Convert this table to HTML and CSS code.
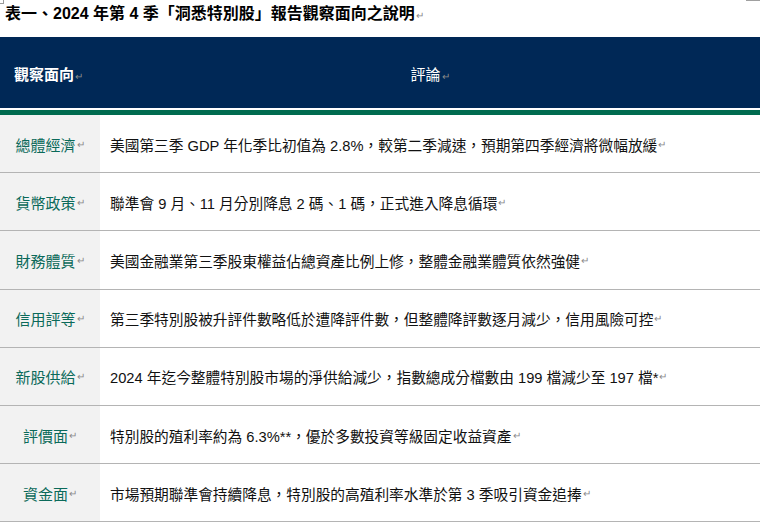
FILE: index.html
```html
<!DOCTYPE html>
<html lang="zh-Hant">
<head>
<meta charset="utf-8">
<title>表一</title>
<link rel="stylesheet" href="styles.css">
</head>
<body>
<div class="page">
  <span class="corner-tl"></span>
  <span class="corner-tr"></span>
  <h1 class="title">表一、2024 年第 4 季「洞悉特別股」報告觀察面向之說明<span class="pm">↵</span></h1>
  <div class="head">
    <div class="head-label">觀察面向<span class="pm">↵</span></div>
    <div class="head-comment">評論<span class="pm">↵</span></div>
  </div>
  <div class="rule"></div>
  <div class="table">
    <div class="row">
      <div class="label">總體經濟<span class="pm">↵</span></div>
      <div class="text">美國第三季 GDP 年化季比初值為 2.8%，較第二季減速，預期第四季經濟將微幅放緩<span class="pm">↵</span></div>
    </div>
    <div class="row">
      <div class="label">貨幣政策<span class="pm">↵</span></div>
      <div class="text">聯準會 9 月、11 月分別降息 2 碼、1 碼，正式進入降息循環<span class="pm">↵</span></div>
    </div>
    <div class="row">
      <div class="label">財務體質<span class="pm">↵</span></div>
      <div class="text">美國金融業第三季股東權益佔總資產比例上修，整體金融業體質依然強健<span class="pm">↵</span></div>
    </div>
    <div class="row">
      <div class="label">信用評等<span class="pm">↵</span></div>
      <div class="text">第三季特別股被升評件數略低於遭降評件數，但整體降評數逐月減少，信用風險可控<span class="pm">↵</span></div>
    </div>
    <div class="row">
      <div class="label">新股供給<span class="pm">↵</span></div>
      <div class="text">2024 年迄今整體特別股市場的淨供給減少，指數總成分檔數由 199 檔減少至 197 檔*<span class="pm">↵</span></div>
    </div>
    <div class="row">
      <div class="label">評價面<span class="pm">↵</span></div>
      <div class="text">特別股的殖利率約為 6.3%**，優於多數投資等級固定收益資產<span class="pm">↵</span></div>
    </div>
    <div class="row">
      <div class="label">資金面<span class="pm">↵</span></div>
      <div class="text">市場預期聯準會持續降息，特別股的高殖利率水準於第 3 季吸引資金追捧<span class="pm">↵</span></div>
    </div>
  </div>
</div>
</body>
</html>
```
FILE: styles.css
```css
html, body {
  margin: 0;
  padding: 0;
  background: #ffffff;
}
body {
  font-family: "Liberation Sans", "Noto Sans CJK TC", sans-serif;
  color: #111111;
}
.page {
  position: relative;
  width: 760px;
  height: 523px;
  overflow: hidden;
}
.corner-tl {
  position: absolute;
  left: 0;
  top: 0;
  width: 3px;
  height: 3px;
  border-right: 1px solid #9a9a9a;
  border-bottom: 1px solid #9a9a9a;
}
.corner-tr {
  position: absolute;
  right: 0;
  top: 0;
  width: 14px;
  height: 1px;
  background: #a0a0a0;
}
.title {
  margin: 0;
  height: 37px;
  padding: 4px 0 0 5px;
  box-sizing: border-box;
  font-size: 16px;
  line-height: 20px;
  font-weight: bold;
  color: #000000;
  white-space: nowrap;
}
.pm {
  font-size: 10px;
  font-weight: normal;
  color: #8a8a8a;
  margin-left: 1px;
}
.head {
  display: grid;
  grid-template-columns: 100px 1fr;
  height: 71px;
  align-items: center;
  background: #002856;
  color: #ffffff;
  font-size: 15px;
  font-weight: bold;
}
.head-label {
  padding-left: 14px;
  padding-top: 1px;
}
.head-comment {
  text-align: center;
  font-weight: normal;
  padding-top: 1px;
}
.rule {
  height: 5px;
  border-top: 2px solid #ffffff;
  background: #006b4f;
}
.table {
  display: flex;
  flex-direction: column;
}
.row {
  display: grid;
  grid-template-columns: 100px 1fr;
  height: 58.2px;
  box-sizing: border-box;
  border-bottom: 1px solid #b4b4b4;
}
.label {
  background: #f2f2f2;
  color: #0b6a5a;
  font-size: 15px;
  display: flex;
  align-items: center;
  justify-content: center;
  padding-top: 1px;
}
.text {
  display: flex;
  align-items: center;
  padding-left: 10px;
  padding-top: 1px;
  font-size: 14.7px;
  white-space: nowrap;
}
```
